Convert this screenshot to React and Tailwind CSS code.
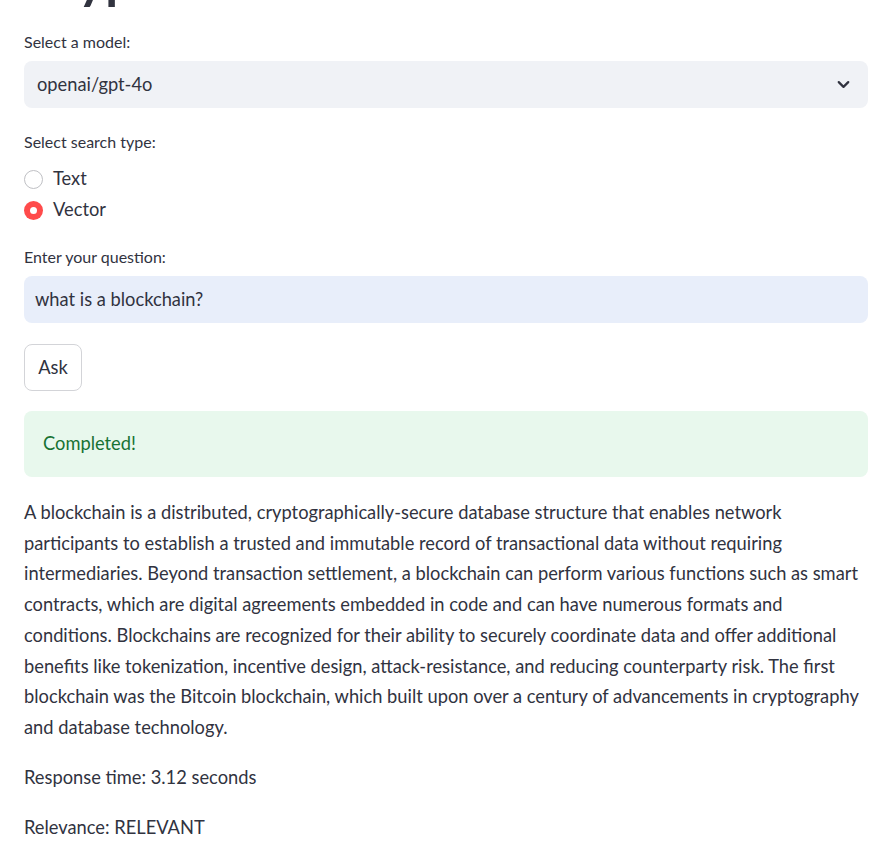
import React from "react";
import { ChevronDown } from "lucide-react";

const lines = [
  "A blockchain is a distributed, cryptographically-secure database structure that enables network",
  "participants to establish a trusted and immutable record of transactional data without requiring",
  "intermediaries. Beyond transaction settlement, a blockchain can perform various functions such as smart",
  "contracts, which are digital agreements embedded in code and can have numerous formats and",
  "conditions. Blockchains are recognized for their ability to securely coordinate data and offer additional",
  "benefits like tokenization, incentive design, attack-resistance, and reducing counterparty risk. The first",
  "blockchain was the Bitcoin blockchain, which built upon over a century of advancements in cryptography",
  "and database technology.",
];

export default function App() {
  return (
    <div className="min-h-[856px] bg-white px-[24px] pr-[23px] text-[#31333F] font-['Lato','Noto_Sans',sans-serif]">
      <div className="h-[10px] overflow-hidden">
        <h1 className="-mt-[52px] text-[52px] leading-[60px] font-bold whitespace-nowrap">Crypto Assistant</h1>
      </div>

      <div className="mt-[22px] h-[20px] text-[16px] leading-[20px]">Select a model:</div>
      <div className="mt-[9px] flex h-[47px] items-center justify-between rounded-[8px] bg-[#F0F2F6] pl-[13px] pr-[15px]">
        <span className="text-[18.3px]">openai/gpt-4o</span>
        <ChevronDown size={19} strokeWidth={2.8} className="text-[#31333F]" />
      </div>

      <div className="mt-[24px] h-[20px] text-[16px] leading-[20px]">Select search type:</div>
      <div className="mt-[15px] flex flex-col gap-[7px]">
        <div className="flex h-[24px] items-center gap-[10px]">
          <span className="h-[19px] w-[19px] rounded-full border border-[#bfc0c4] bg-white" />
          <span className="text-[18.3px]">Text</span>
        </div>
        <div className="flex h-[24px] items-center gap-[10px]">
          <span className="flex h-[19px] w-[19px] items-center justify-center rounded-full bg-[#FF4B4B]">
            <span className="h-[7px] w-[7px] rounded-full bg-white" />
          </span>
          <span className="text-[18.3px]">Vector</span>
        </div>
      </div>

      <div className="mt-[25px] h-[20px] text-[16px] leading-[20px]">Enter your question:</div>
      <div className="mt-[9px] flex h-[47px] items-center rounded-[8px] bg-[#E8EEFA] pl-[11px]">
        <span className="text-[18.3px]">what is a blockchain?</span>
      </div>

      <button className="mt-[21px] flex h-[47px] w-[58px] items-center justify-center rounded-[8px] border border-[#d3d4d8] bg-white text-[18.3px]">
        Ask
      </button>

      <div className="mt-[20px] flex h-[66px] items-center rounded-[8px] bg-[#E8F8ED] px-[19px]">
        <span className="text-[18.3px] text-[#177233]">Completed!</span>
      </div>

      <p className="mt-[20px] text-[18.3px] leading-[30.7px]">
        {lines.map((l, i) => (
          <span key={i} className="block whitespace-nowrap">{l}</span>
        ))}
      </p>
      <p className="mt-[19px] text-[18.3px] leading-[30.7px]">Response time: 3.12 seconds</p>
      <p className="mt-[20px] text-[18.3px] leading-[30.7px]">Relevance: RELEVANT</p>
    </div>
  );
}
